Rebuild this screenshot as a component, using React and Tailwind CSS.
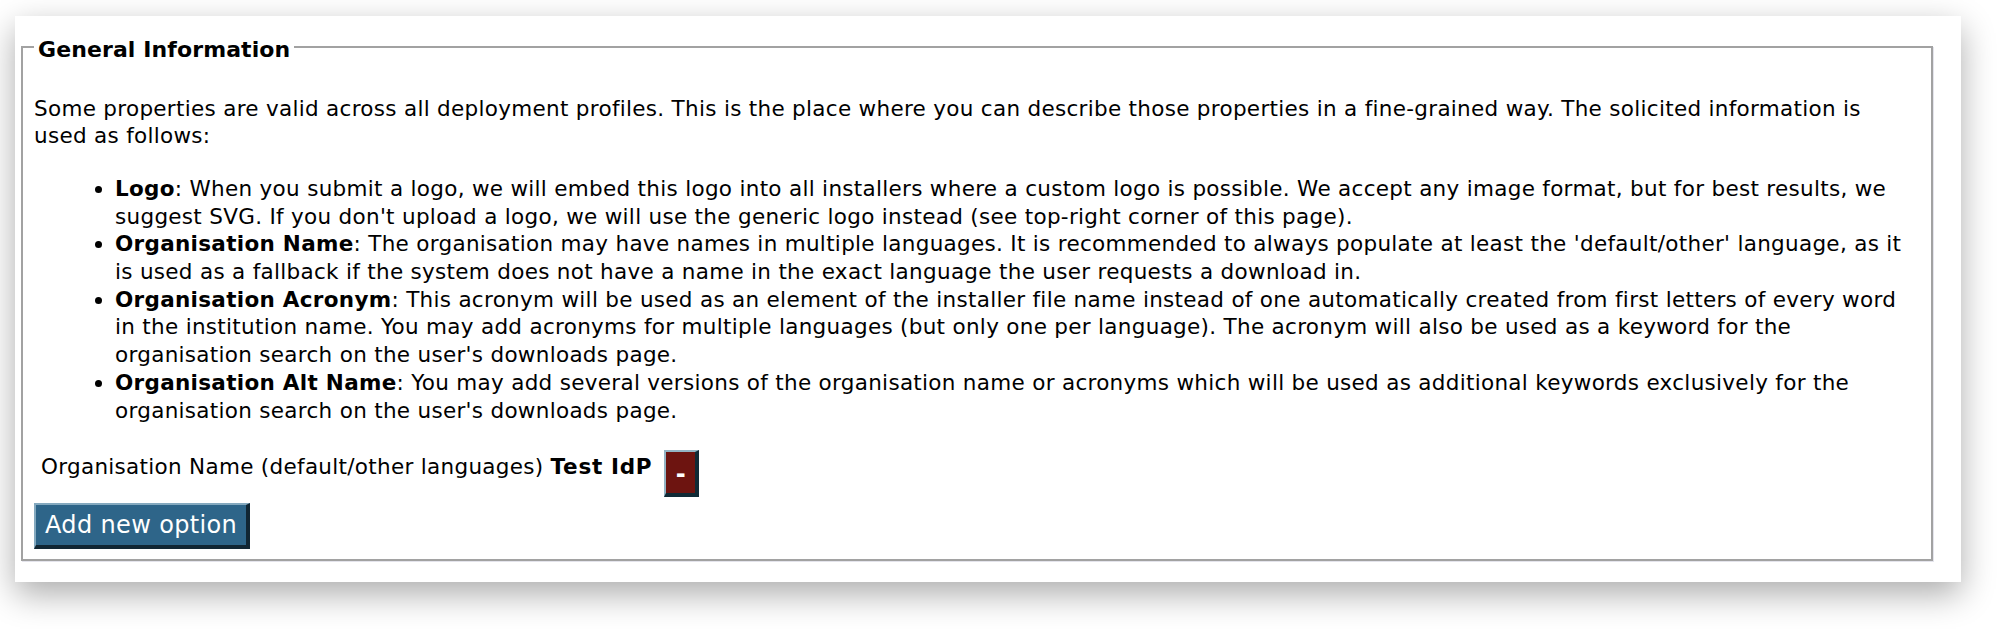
import React from "react";

const font = { fontFamily: '"DejaVu Sans", Verdana, sans-serif' };

export default function App() {
  return (
    <div
      className="min-h-[629px] bg-white pt-[16px] pl-[15px] text-black"
      style={font}
    >
      <div className="w-[1946px] bg-white pl-[6px] pr-[28px] pt-[14px] pb-[21px] shadow-[0_12px_32px_rgba(0,0,0,0.33)]">
        <fieldset className="border-2 border-[#a2a2a2] px-[11px] pb-[10px] shadow-[1px_1px_0_#e4e4ec]">
          <legend className="px-[4px] pt-[6px] text-[22px] font-bold leading-[27.5px] tracking-[0.1px]">
            General Information
          </legend>
          <p className="mt-[31px] mb-[25px] text-[21.5px] leading-[27.7px] tracking-[0.3px]">
            Some properties are valid across all deployment profiles. This is the place where you can describe those properties in a fine-grained way. The solicited information is used as follows:
          </p>
          <ul className="mb-[25.5px] list-disc pl-[81px] text-[21.5px] leading-[27.7px] tracking-[0.3px]">
            <li>
              <b>Logo</b>: When you submit a logo, we will embed this logo into all installers where a custom logo is possible. We accept any image format, but for best results, we suggest SVG. If you don't upload a logo, we will use the generic logo instead (see top-right corner of this page).
            </li>
            <li>
              <b>Organisation Name</b>: The organisation may have names in multiple languages. It is recommended to always populate at least the 'default/other' language, as it is used as a fallback if the system does not have a name in the exact language the user requests a download in.
            </li>
            <li>
              <b>Organisation Acronym</b>: This acronym will be used as an element of the installer file name instead of one automatically created from first letters of every word in the institution name. You may add acronyms for multiple languages (but only one per language). The acronym will also be used as a keyword for the organisation search on the user's downloads page.
            </li>
            <li>
              <b>Organisation Alt Name</b>: You may add several versions of the organisation name or acronyms which will be used as additional keywords exclusively for the organisation search on the user's downloads page.
            </li>
          </ul>
          <div className="flex items-start pl-[7px]">
            <span className="mt-[3px] text-[21.5px] leading-[27.7px] tracking-[0.3px]">
              Organisation Name (default/other languages){" "}
              <b className="tracking-[0.7px]">Test IdP</b>
            </span>
            <button
              type="button"
              className="ml-[12px] flex h-[47px] w-[35px] items-start justify-center border-t-2 border-l-2 border-r-4 border-b-4 border-t-[#94b4c4] border-l-[#94b4c4] border-r-[#102a36] border-b-[#102a36] bg-[#6d1410] pt-[10px] text-[24px] font-bold leading-none text-white"
              style={font}
            >
              -
            </button>
          </div>
          <button
            type="button"
            className="mt-[6px] block h-[46px] border-t-2 border-l-2 border-r-4 border-b-4 border-t-[#84a9bf] border-l-[#84a9bf] border-r-[#112633] border-b-[#112633] bg-[#2e6589] px-[9px] text-[24px] leading-[28px] tracking-[0.35px] text-white"
            style={font}
          >
            Add new option
          </button>
        </fieldset>
      </div>
    </div>
  );
}
